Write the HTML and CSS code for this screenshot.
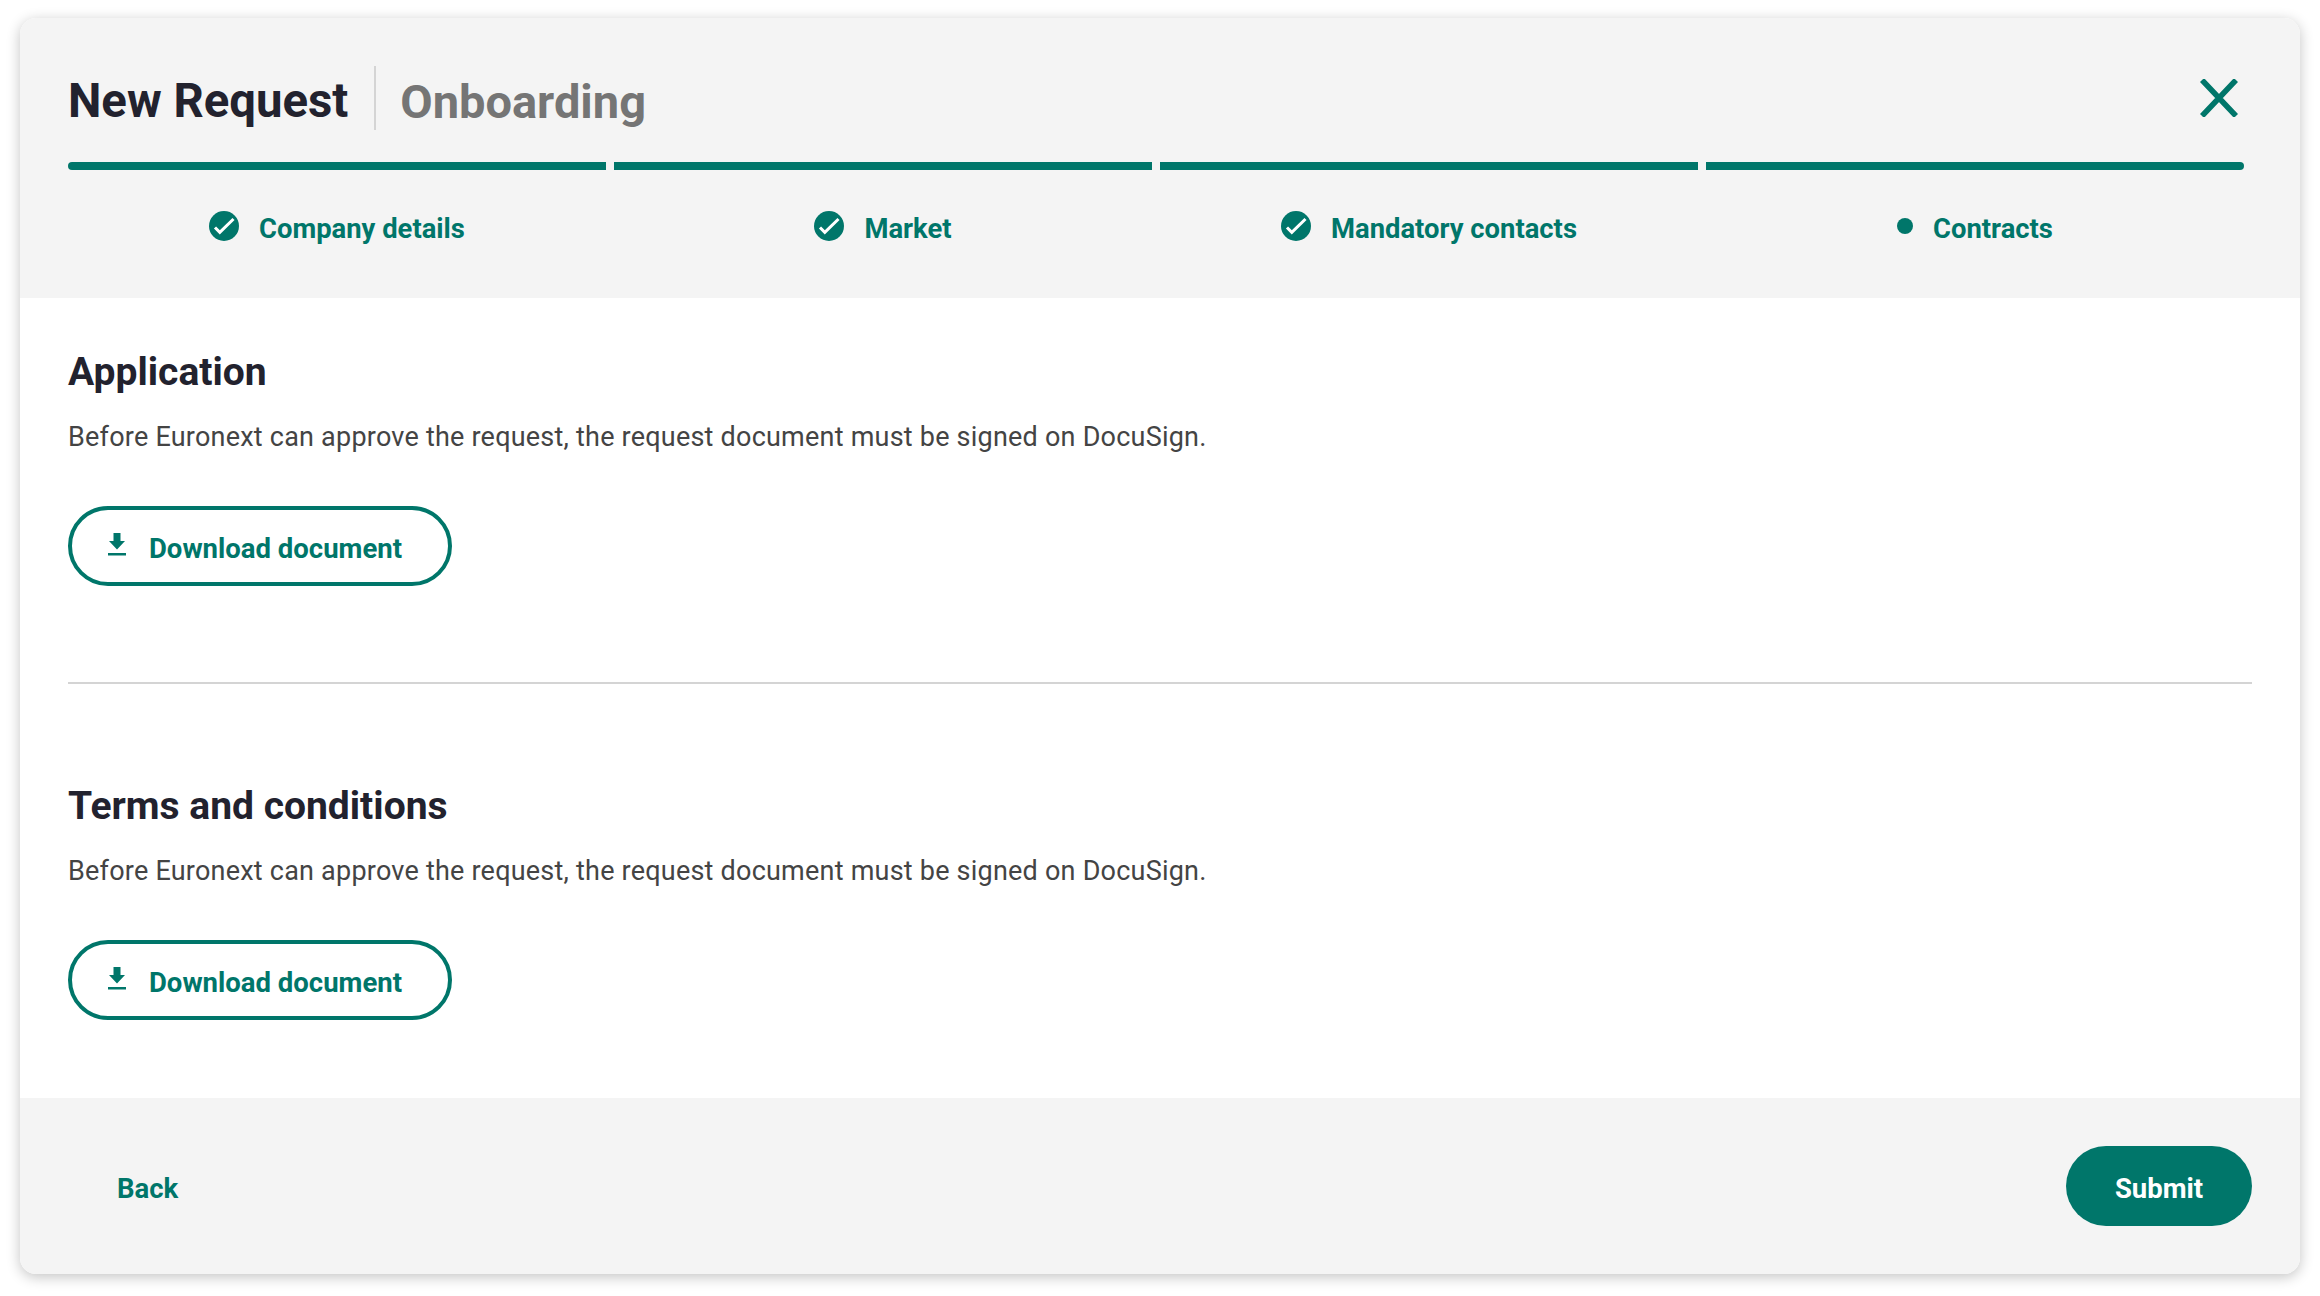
FILE: index.html
```html
<!DOCTYPE html>
<html lang="en">
<head>
<meta charset="utf-8">
<title>New Request</title>
<link rel="stylesheet" href="styles.css">
</head>
<body>
<main class="card">
  <header class="header">
    <div class="title-row">
      <h1 class="title">New Request</h1>
      <span class="subtitle">Onboarding</span>
      <button class="close" aria-label="Close">
        <svg width="38" height="38" viewBox="0 0 38 38"><path d="M2 1 L36 37 M36 1 L2 37" fill="none" stroke="#00766a" stroke-width="5.6"/></svg>
      </button>
    </div>
    <div class="steps">
      <div class="step step-first"><div class="bar"></div><div class="label">
        <svg class="check" width="30" height="30" viewBox="0 0 30 30"><circle cx="15" cy="15" r="15" fill="#00766a"/><path d="M6 16.5l4.8 4.8L24.5 8" fill="none" stroke="#fff" stroke-width="3"/></svg>
        <span>Company details</span></div></div>
      <div class="step"><div class="bar"></div><div class="label">
        <svg class="check" width="30" height="30" viewBox="0 0 30 30"><circle cx="15" cy="15" r="15" fill="#00766a"/><path d="M6 16.5l4.8 4.8L24.5 8" fill="none" stroke="#fff" stroke-width="3"/></svg>
        <span>Market</span></div></div>
      <div class="step"><div class="bar"></div><div class="label">
        <svg class="check" width="30" height="30" viewBox="0 0 30 30"><circle cx="15" cy="15" r="15" fill="#00766a"/><path d="M6 16.5l4.8 4.8L24.5 8" fill="none" stroke="#fff" stroke-width="3"/></svg>
        <span>Mandatory contacts</span></div></div>
      <div class="step step-last"><div class="bar"></div><div class="label">
        <i class="dot"></i>
        <span>Contracts</span></div></div>
    </div>
  </header>
  <section class="content">
    <div class="block">
      <h2 class="heading">Application</h2>
      <p class="text">Before Euronext can approve the request, the request document must be signed on DocuSign.</p>
      <button class="outline">
        <svg width="18" height="23" viewBox="0 0 18 23"><path d="M5.5 0h7v8h4.5l-8 8.5L1 8h4.5z M0 20h18v2.5H0z" fill="#00766a"/></svg>
        <span>Download document</span>
      </button>
    </div>
    <hr class="rule">
    <div class="block">
      <h2 class="heading">Terms and conditions</h2>
      <p class="text">Before Euronext can approve the request, the request document must be signed on DocuSign.</p>
      <button class="outline">
        <svg width="18" height="23" viewBox="0 0 18 23"><path d="M5.5 0h7v8h4.5l-8 8.5L1 8h4.5z M0 20h18v2.5H0z" fill="#00766a"/></svg>
        <span>Download document</span>
      </button>
    </div>
  </section>
  <footer class="footer">
    <button class="back">Back</button>
    <button class="submit">Submit</button>
  </footer>
</main>
</body>
</html>
```
FILE: styles.css
```css
* { box-sizing: border-box; }
html, body { margin: 0; height: 100%; background: #fff; }
body {
  padding: 18px 20px 22px;
  font-family: Roboto, "Liberation Sans", sans-serif;
}
button { font-family: inherit; background: none; border: 0; padding: 0; cursor: pointer; }
.card {
  height: 1256px;
  display: flex;
  flex-direction: column;
  border-radius: 16px;
  overflow: hidden;
  background: #fff;
  box-shadow: 0 3px 14px rgba(0, 0, 0, .24);
}
.header {
  height: 280px;
  flex: none;
  background: #f4f4f4;
  padding: 48px 56px 0 48px;
}
.title-row {
  display: flex;
  align-items: center;
  height: 64px;
  margin-bottom: 32px;
}
.title {
  margin: 0;
  padding: 0 26px 0 0;
  height: 64px;
  border-right: 2px solid #d4d4d4;
  font-size: 47.3px;
  line-height: 70px;
  font-weight: 700;
  color: #22222e;
}
.subtitle {
  margin-left: 24px;
  padding-top: 6px;
  font-size: 47px;
  font-weight: 700;
  color: #757575;
}
.close { margin-left: auto; margin-right: 6px; height: 38px; }
.close svg { display: block; }
.steps {
  display: grid;
  grid-template-columns: repeat(4, 1fr);
  gap: 8px;
}
.bar { height: 8px; background: #00766a; }
.step-first .bar { border-radius: 4px 0 0 4px; }
.step-last .bar { border-radius: 0 4px 4px 0; }
.label {
  display: flex;
  align-items: center;
  justify-content: center;
  gap: 20px;
  margin-top: 41px;
  height: 30px;
  font-size: 27.4px;
  font-weight: 700;
  color: #00766a;
}
.label span { position: relative; top: 3px; }
.dot { width: 16px; height: 16px; border-radius: 50%; background: #00766a; }
.content {
  flex: 1;
  padding: 52px 48px 0;
}
.heading {
  margin: 0;
  font-size: 39px;
  line-height: 44px;
  font-weight: 700;
  color: #22222e;
}
.text {
  margin: 25px 0 0;
  font-size: 27px;
  letter-spacing: .22px;
  line-height: 36px;
  color: #444;
}
.outline {
  display: flex;
  align-items: center;
  gap: 23px;
  width: 384px;
  height: 80px;
  margin-top: 51px;
  padding-left: 36px;
  border: 4px solid #00766a;
  border-radius: 40px;
  font-size: 27.5px;
  font-weight: 700;
  color: #00766a;
}
.outline span { position: relative; top: 2px; }
.outline svg { flex: none; margin-top: -4px; }
.rule {
  margin: 96px 0 100px;
  border: 0;
  border-top: 2px solid #d4d4d4;
}
.footer {
  height: 176px;
  flex: none;
  display: flex;
  align-items: center;
  justify-content: space-between;
  background: #f4f4f4;
  padding: 0 48px;
}
.back {
  margin-left: 49px;
  padding-top: 4px;
  font-size: 27.5px;
  font-weight: 700;
  color: #00766a;
}
.submit {
  width: 186px;
  height: 80px;
  padding-top: 4px;
  border-radius: 40px;
  background: #00766a;
  color: #fff;
  font-size: 27.5px;
  font-weight: 700;
}
```
